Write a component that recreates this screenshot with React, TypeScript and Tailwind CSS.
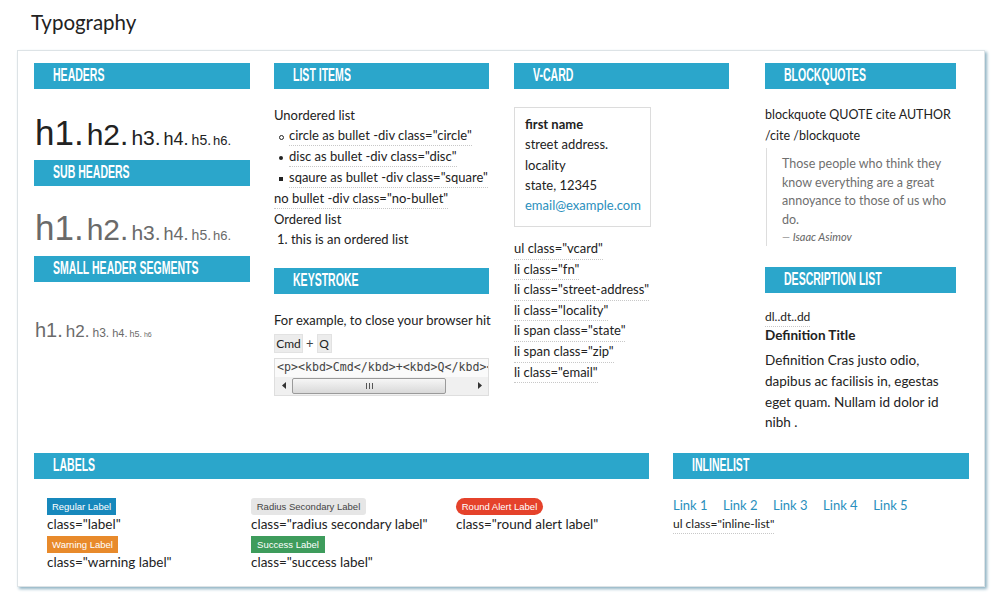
import type { ReactNode } from "react";

function Bar({ children }: { children: ReactNode }) {
  return (
    <div className="flex h-[26px] items-center bg-[#2ba6cb] pb-[2px] pl-[19px]">
      <span className="inline-block origin-left scale-x-[0.585] whitespace-nowrap font-['Liberation_Sans',Arial,sans-serif] text-[18px] font-bold leading-none text-white">
        {children}
      </span>
    </div>
  );
}

function Dotted({ children, className = "" }: { children: ReactNode; className?: string }) {
  return <span className={`border-b border-dotted border-[#c8c8c8] ${className}`}>{children}</span>;
}

export default function App() {
  return (
    <div className="min-h-[599px] bg-white font-['Lato',sans-serif] text-[#222]">
      <h1 className="h-[50px] pl-[31px] pt-[7px] text-[20.5px] leading-[30px]">Typography</h1>

      <div className="ml-[17px] w-[968px] border border-[#dde3e6] pl-[16px] pt-[12px] shadow-[2px_2px_3px_#8fb3c3]">
        {/* top row */}
        <div className="grid h-[390px] grid-cols-[240px_240px_251px_191px]">
          {/* headers */}
          <div className="w-[216px]">
            <Bar>HEADERS</Bar>
            <div className="flex h-[71px] items-baseline whitespace-nowrap pl-[1px] pt-[26px] font-['Liberation_Sans',Arial,sans-serif] leading-none text-[#222]">
              <span className="mr-[3px] text-[35px]">h1.</span>
              <span className="mr-[3px] text-[30px]">h2.</span>
              <span className="mr-[3px] text-[21px]">h3.</span>
              <span className="mr-[3px] text-[18px]">h4.</span>
              <span className="mr-[2px] text-[14px]">h5.</span>
              <span className="text-[13px]">h6.</span>
            </div>
            <Bar>SUB HEADERS</Bar>
            <div className="flex h-[70px] items-baseline whitespace-nowrap pl-[1px] pt-[24px] font-['Liberation_Sans',Arial,sans-serif] leading-none text-[#6a6a6a]">
              <span className="mr-[3px] text-[35px]">h1.</span>
              <span className="mr-[3px] text-[30px]">h2.</span>
              <span className="mr-[3px] text-[21px]">h3.</span>
              <span className="mr-[3px] text-[18px]">h4.</span>
              <span className="mr-[2px] text-[14px]">h5.</span>
              <span className="text-[13px]">h6.</span>
            </div>
            <Bar>SMALL HEADER SEGMENTS</Bar>
            <div className="flex items-baseline whitespace-nowrap pl-[1px] pt-[38px] font-['Liberation_Sans',Arial,sans-serif] leading-none text-[#6a6a6a]">
              <span className="mr-[3px] text-[20px]">h1.</span>
              <span className="mr-[3px] text-[17px]">h2.</span>
              <span className="mr-[3px] text-[12px]">h3.</span>
              <span className="mr-[2px] text-[11px]">h4.</span>
              <span className="mr-[2px] text-[9px]">h5.</span>
              <span className="text-[7px]">h6</span>
            </div>
          </div>

          {/* list items + keystroke */}
          <div className="w-[215px] text-[13px]">
            <Bar>LIST ITEMS</Bar>
            <div className="h-[179px] pt-[16px] leading-[20px]">
              <div>Unordered list</div>
              <ul>
                <li className="flex">
                  <span className="ml-[5px] mr-[5px] mt-[10px] h-[5px] w-[5px] rounded-full border border-[#222]" />
                  <Dotted>circle as bullet -div class="circle"</Dotted>
                </li>
                <li className="flex">
                  <span className="ml-[5px] mr-[6px] mt-[10px] h-[4px] w-[4px] rounded-full bg-[#222]" />
                  <Dotted>disc as bullet -div class="disc"</Dotted>
                </li>
                <li className="flex">
                  <span className="ml-[5px] mr-[6px] mt-[10px] h-[4px] w-[4px] bg-[#222]" />
                  <Dotted>sqaure as bullet -div class="square"</Dotted>
                </li>
                <li className="flex">
                  <Dotted>no bullet -div class="no-bullet"</Dotted>
                </li>
              </ul>
              <div>Ordered list</div>
              <div className="pl-[3px]">1. this is an ordered list</div>
            </div>
            <Bar>KEYSTROKE</Bar>
            <div className="mt-[16px] whitespace-nowrap leading-[20px]">For example, to close your browser hit</div>
            <div className="mt-[4px] flex items-center gap-[3px] text-[12px]">
              <span className="flex h-[19px] w-[29px] items-center justify-center border border-[#e2e2e2] bg-[#ececec]">Cmd</span>
              <span className="text-[13px] text-[#444]">+</span>
              <span className="flex h-[19px] w-[15px] items-center justify-center border border-[#e2e2e2] bg-[#ececec]">Q</span>
            </div>
            <div className="mt-[4px] border border-[#dedede] bg-[#fafafa]">
              <div className="h-[18px] overflow-hidden whitespace-nowrap pl-[2px] font-['DejaVu_Sans_Mono',monospace] text-[11.6px] leading-[16px] text-[#444]">
                &lt;p&gt;&lt;kbd&gt;Cmd&lt;/kbd&gt;+&lt;kbd&gt;Q&lt;/kbd&gt;&lt;/p&gt;
              </div>
              <div className="flex h-[18px] items-center bg-[#f0f0f0]">
                <div className="flex w-[17px] items-center justify-center">
                  <svg width="4" height="7" viewBox="0 0 4 7"><path d="M4 0L0 3.5L4 7Z" fill="#333" /></svg>
                </div>
                <div className="flex h-[16px] w-[154px] items-center justify-center rounded-[2px] border border-[#9a9a9a] bg-gradient-to-b from-[#f6f6f6] to-[#d9d9d9]">
                  <svg width="7" height="6" viewBox="0 0 7 6">
                    <path d="M0.5 0V6M3.5 0V6M6.5 0V6" stroke="#555" strokeWidth="1" />
                  </svg>
                </div>
                <div className="flex-1" />
                <div className="flex w-[17px] items-center justify-center">
                  <svg width="4" height="7" viewBox="0 0 4 7"><path d="M0 0L4 3.5L0 7Z" fill="#333" /></svg>
                </div>
              </div>
            </div>
          </div>

          {/* v-card */}
          <div className="w-[215px] text-[13px]">
            <Bar>V-CARD</Bar>
            <div className="mt-[18px] h-[120px] w-[137px] border border-[#dcdcdc] pl-[10px] pt-[6px] leading-[20.3px]">
              <div className="font-bold">first name</div>
              <div>street address.</div>
              <div>locality</div>
              <div>state, 12345</div>
              <div className="text-[#2a8fbd]">email@example.com</div>
            </div>
            <ul className="mt-[12px] leading-[19.6px]">
              <li className="flex"><Dotted>ul class="vcard"</Dotted></li>
              <li className="flex"><Dotted>li class="fn"</Dotted></li>
              <li className="flex"><Dotted>li class="street-address"</Dotted></li>
              <li className="flex"><Dotted>li class="locality"</Dotted></li>
              <li className="flex"><Dotted>li span class="state"</Dotted></li>
              <li className="flex"><Dotted>li span class="zip"</Dotted></li>
              <li className="flex"><Dotted>li class="email"</Dotted></li>
            </ul>
          </div>

          {/* blockquotes + description list */}
          <div className="w-[191px] text-[13px]">
            <Bar>BLOCKQUOTES</Bar>
            <p className="mt-[16px] text-[12.5px] leading-[20.6px]">blockquote QUOTE cite AUTHOR /cite /blockquote</p>
            <blockquote className="ml-[1px] mt-[2px] h-[98px] border-l border-[#dddddd] pl-[15px] pt-[7px] text-[12.5px] leading-[18.5px] text-[#6f6f6f]">
              Those people who think they know everything are a great annoyance to those of us who do.
              <div className="mt-[1px] text-[11px] italic leading-[14px] text-[#666]">— Isaac Asimov</div>
            </blockquote>
            <div className="mt-[21px]">
              <Bar>DESCRIPTION LIST</Bar>
            </div>
            <div className="mt-[15px] flex text-[12px] leading-[18px]"><Dotted>dl..dt..dd</Dotted></div>
            <div className="text-[13.5px] font-bold leading-[16px]">Definition Title</div>
            <p className="mt-[7px] text-[13.5px] leading-[20.67px]">
              Definition Cras justo odio, dapibus ac facilisis in, egestas eget quam. Nullam id dolor id nibh .
            </p>
          </div>
        </div>

        {/* bottom row */}
        <div className="grid h-[133px] grid-cols-[639px_296px]">
          <div className="w-[615px]">
            <Bar>LABELS</Bar>
            <div className="mt-[19px] grid grid-cols-[204px_205px_160px] pl-[13px] text-[13.5px] leading-[14px]">
              <div>
                <span className="flex h-[17px] w-[69px] items-center justify-center bg-[#1788bc] font-['Liberation_Sans',Arial,sans-serif] text-[9.5px] text-white">Regular Label</span>
                <div className="h-[16px] pt-[2px]">class="label"</div>
                <span className="mt-[5px] flex h-[17px] w-[71px] items-center justify-center bg-[#e88a2b] font-['Liberation_Sans',Arial,sans-serif] text-[9.5px] text-white">Warning Label</span>
                <div className="pt-[2px]">class="warning label"</div>
              </div>
              <div>
                <span className="flex h-[17px] w-[115px] items-center justify-center rounded-[3px] bg-[#e6e6e6] font-['Liberation_Sans',Arial,sans-serif] text-[9.5px] text-[#444]">Radius Secondary Label</span>
                <div className="h-[16px] pt-[2px]">class="radius secondary label"</div>
                <span className="mt-[5px] flex h-[17px] w-[74px] items-center justify-center bg-[#3e9c5c] font-['Liberation_Sans',Arial,sans-serif] text-[9.5px] text-white">Success Label</span>
                <div className="pt-[2px]">class="success label"</div>
              </div>
              <div>
                <span className="flex h-[17px] w-[87px] items-center justify-center rounded-full bg-[#e5422b] font-['Liberation_Sans',Arial,sans-serif] text-[9.5px] text-white">Round Alert Label</span>
                <div className="pt-[2px]">class="round alert label"</div>
              </div>
            </div>
          </div>
          <div className="w-[296px]">
            <Bar>INLINELIST</Bar>
            <ul className="mt-[16px] flex gap-[15.5px] text-[13px] leading-[20px] text-[#2a8fbd]">
              <li>Link 1</li>
              <li>Link 2</li>
              <li>Link 3</li>
              <li>Link 4</li>
              <li>Link 5</li>
            </ul>
            <div className="flex text-[12px] leading-[18px]"><Dotted>ul class="inline-list"</Dotted></div>
          </div>
        </div>
      </div>
    </div>
  );
}
